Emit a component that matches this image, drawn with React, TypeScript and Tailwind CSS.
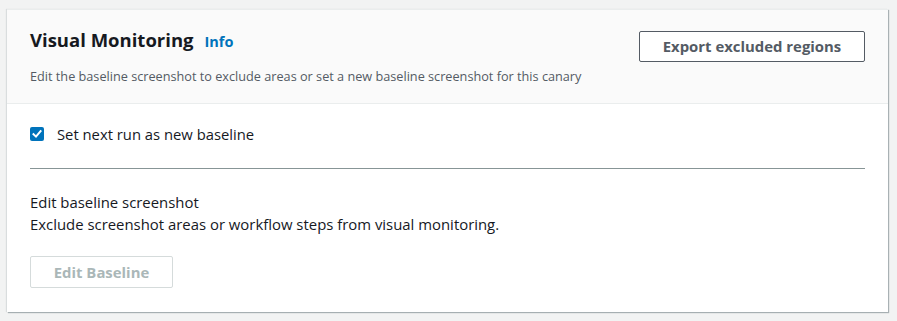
import React from "react";

export default function App() {
  return (
    <div
      className="min-h-[321px] w-[897px] bg-[#f2f3f3] pl-[7px] pt-[9px]"
      style={{ fontFamily: '"Open Sans", "Liberation Sans", Arial, sans-serif' }}
    >
      <div className="w-[881px] bg-white shadow-[1px_1px_1px_0_rgba(0,28,36,0.3),-1px_0_1px_0_rgba(0,28,36,0.1)] border-t border-[#eaeded]">
        <div className="flex items-start justify-between bg-[#fafafa] border-b border-[#eaeded] px-[23px] pt-[19px] pb-[19px]">
          <div>
            <div className="flex items-baseline gap-[11px] h-[22px]">
              <h2 className="text-[18.5px] leading-[22px] font-bold text-[#16191f]">Visual Monitoring</h2>
              <a className="text-[14.5px] font-bold text-[#0073bb] leading-[22px]">Info</a>
            </div>
            <p className="mt-[17px] text-[12.7px] leading-[16px] text-[#545b64]">
              Edit the baseline screenshot to exclude areas or set a new baseline screenshot for this canary
            </p>
          </div>
          <button className="mt-[2px] h-[31px] w-[226px] rounded-[2px] border border-[#545b64] bg-white text-[14.9px] font-bold text-[#545b64]">
            Export excluded regions
          </button>
        </div>
        <div className="px-[23px] pt-[20px] pb-[24px]">
          <label className="flex items-center gap-[13px] h-[20px]">
            <span className="flex h-[14px] w-[14px] items-center justify-center rounded-[2px] bg-[#0073bb]">
              <svg width="10" height="10" viewBox="0 0 10 10" fill="none">
                <path d="M1.5 5.2 L4 7.6 L8.6 2.2" stroke="white" strokeWidth="2" strokeLinecap="square" />
              </svg>
            </span>
            <span className="text-[14.8px] leading-[20px] text-[#16191f]">Set next run as new baseline</span>
          </label>
          <div className="mt-[24px] h-px bg-[#879596]" />
          <div className="mt-[22px] text-[14.9px] leading-[22px] text-[#16191f]">
            <div>Edit baseline screenshot</div>
            <div>Exclude screenshot areas or workflow steps from visual monitoring.</div>
          </div>
          <button
            disabled
            className="mt-[21px] h-[32px] w-[143px] rounded-[2px] border border-[#d5dbdb] bg-white text-[14.9px] font-bold text-[#aab7b8]"
          >
            Edit Baseline
          </button>
        </div>
      </div>
    </div>
  );
}
